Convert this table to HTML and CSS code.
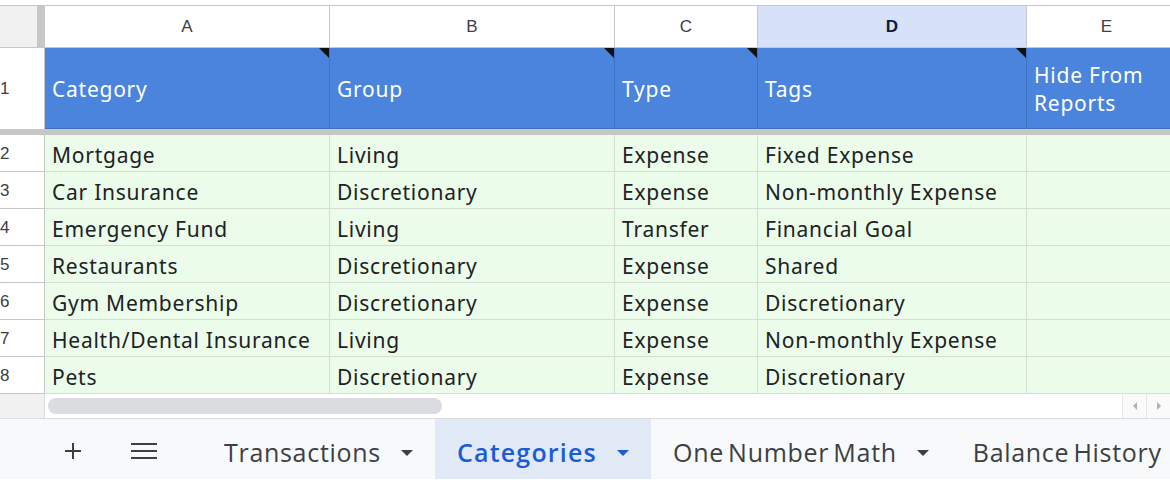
FILE: index.html
```html
<!DOCTYPE html>
<html>
<head>
<meta charset="utf-8">
<link rel="stylesheet" href="styles.css">
</head>
<body>
<div class="sheet">
  <div class="row colhead">
    <div class="corner"></div>
    <div class="ch">A</div>
    <div class="ch">B</div>
    <div class="ch">C</div>
    <div class="ch sel">D</div>
    <div class="ch">E</div>
  </div>
  <div class="row headrow">
    <div class="rn">1</div>
    <div class="hc">Category</div>
    <div class="hc">Group</div>
    <div class="hc">Type</div>
    <div class="hc">Tags</div>
    <div class="hc two">Hide From<br>Reports</div>
  </div>
  <div class="freeze"></div>
  <div class="row data"><div class="rn">2</div><div class="c">Mortgage</div><div class="c">Living</div><div class="c">Expense</div><div class="c">Fixed Expense</div><div class="c"></div></div>
  <div class="row data"><div class="rn">3</div><div class="c">Car Insurance</div><div class="c">Discretionary</div><div class="c">Expense</div><div class="c">Non-monthly Expense</div><div class="c"></div></div>
  <div class="row data"><div class="rn">4</div><div class="c">Emergency Fund</div><div class="c">Living</div><div class="c">Transfer</div><div class="c">Financial Goal</div><div class="c"></div></div>
  <div class="row data"><div class="rn">5</div><div class="c">Restaurants</div><div class="c">Discretionary</div><div class="c">Expense</div><div class="c">Shared</div><div class="c"></div></div>
  <div class="row data"><div class="rn">6</div><div class="c">Gym Membership</div><div class="c">Discretionary</div><div class="c">Expense</div><div class="c">Discretionary</div><div class="c"></div></div>
  <div class="row data"><div class="rn">7</div><div class="c">Health/Dental Insurance</div><div class="c">Living</div><div class="c">Expense</div><div class="c">Non-monthly Expense</div><div class="c"></div></div>
  <div class="row data"><div class="rn">8</div><div class="c">Pets</div><div class="c">Discretionary</div><div class="c">Expense</div><div class="c">Discretionary</div><div class="c"></div></div>
  <div class="hscroll">
    <div class="hs-corner"></div>
    <div class="hs-track"><div class="thumb"></div></div>
    <div class="hs-btns">
      <div class="hs-btn"><svg width="8" height="10" viewBox="0 0 8 10"><path d="M6 1 L2 5 L6 9 Z" fill="#b0b0b0"/></svg></div>
      <div class="hs-btn"><svg width="8" height="10" viewBox="0 0 8 10"><path d="M2 1 L6 5 L2 9 Z" fill="#b0b0b0"/></svg></div>
    </div>
  </div>
</div>
<div class="tabbar">
  <div class="tool plus"><svg width="20" height="20" viewBox="0 0 20 20"><path d="M10 2 V18 M2 10 H18" stroke="#3c4043" stroke-width="2"/></svg></div>
  <div class="tool menu"><svg width="28" height="18" viewBox="0 0 28 18"><path d="M1 2 H27 M1 9 H27 M1 16 H27" stroke="#3c4043" stroke-width="2"/></svg></div>
  <div class="tab">Transactions<span class="arrow"></span></div>
  <div class="tab active">Categories<span class="arrow"></span></div>
  <div class="tab">One Number Math<span class="arrow"></span></div>
  <div class="tab">Balance History<span class="arrow"></span></div>
</div>
</body>
</html>
```
FILE: styles.css
```css
* { box-sizing: border-box; }
html, body { margin: 0; padding: 0; background: #fff; overflow: hidden; }
body {
  width: 1170px;
  height: 480px;
  padding-top: 5px;
  font-family: "Noto Sans", "Open Sans", sans-serif;
}
.sheet {
  border-top: 1px solid #c7c7c7;
  width: 1170px;
  overflow: hidden;
}
.row {
  display: grid;
  grid-template-columns: 45px 285px 285px 143px 269px 160px;
}
.colhead { height: 42px; border-bottom: 1px solid #c7c7c7; }
.corner {
  background: #f1f1f1;
  border-right: 8px solid #c7c7c7;
}
.ch {
  display: flex;
  align-items: center;
  justify-content: center;
  font-family: "Liberation Sans", Arial, sans-serif;
  font-size: 17px;
  color: #3c4043;
  border-right: 1px solid #c7c7c7;
  background: #fff;
}
.ch.sel { background: #d5e2fa; color: #0b1d3a; font-weight: bold; }
.headrow { height: 81px; }
.rn {
  display: flex;
  align-items: center;
  padding-left: 0;
  padding-top: 1px;
  font-family: "Liberation Sans", Arial, sans-serif;
  font-size: 17px;
  color: #3c4043;
  border-right: 1px solid #c7c7c7;
  border-bottom: 1px solid #c7c7c7;
  background: #fff;
}
.headrow .rn { border-bottom: none; }
.hc {
  position: relative;
  display: flex;
  align-items: center;
  padding-left: 7px;
  padding-top: 1px;
  background: #4a84dc;
  color: #fff;
  font-size: 21px;
  line-height: 28px;
  letter-spacing: 0.75px;
  border-right: 1px solid #3e71c2;
  border-bottom: 1px solid #3e71c2;
}
.hc::after {
  content: "";
  position: absolute;
  top: 0;
  right: 0;
  border-top: 10px solid #111;
  border-left: 10px solid transparent;
}
.freeze { height: 6px; background: #c7c7c7; }
.data { height: 37px; }
.c {
  display: flex;
  align-items: center;
  padding-left: 7px;
  padding-top: 3px;
  background: #ebfcea;
  color: #202124;
  font-size: 21px;
  letter-spacing: 0.75px;
  white-space: nowrap;
  overflow: hidden;
  border-right: 1px solid #d5ddd4;
  border-bottom: 1px solid #d5ddd4;
}
.hscroll {
  height: 25px;
  display: flex;
  border-bottom: 1px solid #dadce0;
}
.hs-corner { width: 45px; background: #f1f1f1; border-right: 1px solid #dadce0; }
.hs-track { flex: 1; padding: 4px 3px; }
.thumb { width: 394px; height: 16px; border-radius: 8px; background: #dadce0; }
.hs-btns { display: flex; width: 48px; }
.hs-btn {
  width: 24px;
  display: flex;
  align-items: center;
  justify-content: center;
  border-left: 1px solid #e6e6e6;
  background: #fafafa;
}
.tabbar {
  height: 60px;
  width: 1170px;
  overflow: hidden;
  background: #f8f9fb;
  display: flex;
  align-items: stretch;
  white-space: nowrap;
}
.tabbar > * { flex-shrink: 0; }
.tool { display: flex; align-items: center; justify-content: center; padding-top: 4px; }
.plus { width: 40px; margin-left: 53px; }
.menu { width: 28px; margin-left: 37px; margin-right: 44px; }
.tab {
  display: flex;
  align-items: center;
  gap: 20px;
  padding: 5px 22px 0;
  font-family: "Open Sans", sans-serif;
  font-size: 25px;
  color: #3c4043;
  letter-spacing: 0.7px;
  word-spacing: -3px;
}
.arrow {
  width: 0;
  height: 0;
  border-left: 6px solid transparent;
  border-right: 6px solid transparent;
  border-top: 6px solid #3c4043;
  margin-top: 2px;
}
.tab.active {
  background: #e1e9f7;
  color: #1a5bd6;
  font-weight: 600;
  letter-spacing: 1.2px;
}
.tab.active .arrow { border-top-color: #1a5bd6; }
```
